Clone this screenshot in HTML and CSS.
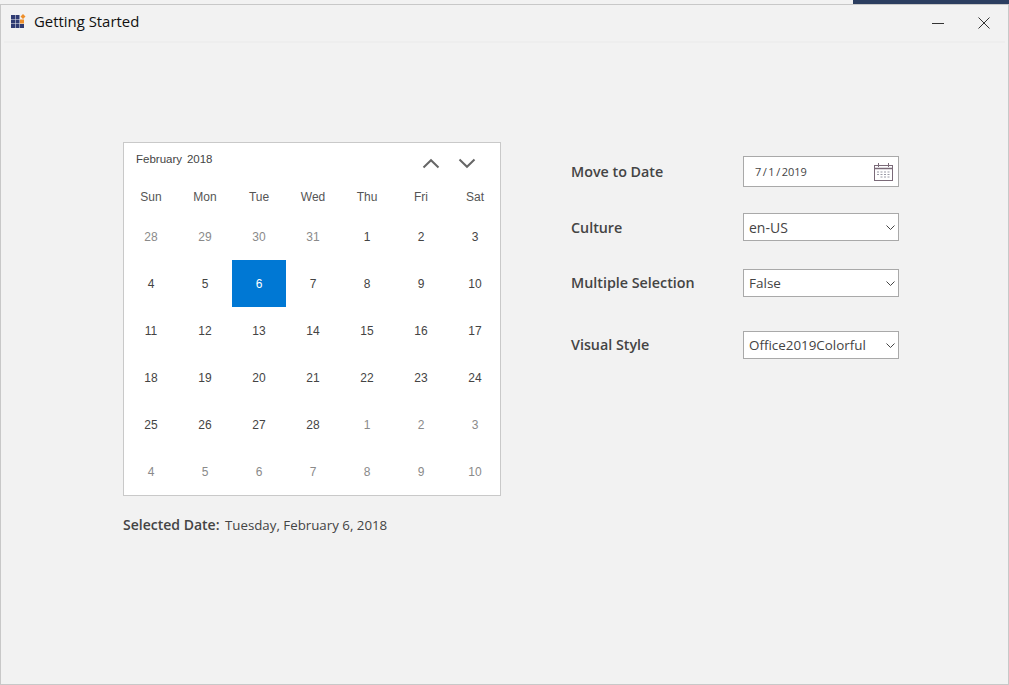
FILE: index.html
```html
<!DOCTYPE html>
<html lang="en">
<head>
<meta charset="utf-8">
<title>Getting Started</title>
<link rel="stylesheet" href="styles.css">
</head>
<body>
<div class="strip"><div class="strip-dark"></div></div>
<div class="window">
  <header class="titlebar">
    <svg class="app-icon" width="15" height="15" viewBox="0 0 15 15">
      <path fill="#2f3b73" d="M0 1h4v4H0zM4.500 1h4v4h-4zM0 5.500h4v4H0zM4.500 5.500h4v4h-4zM0 10h4v4H0zM4.500 10h4v4h-4zM9 10h4v4H9z"/>
      <path fill="#ee8f2b" d="M9 5.500h4v4H9zM12 0l2.500 2.500L12 5 9.500 2.500z"/>
    </svg>
    <span class="title">Getting Started</span>
    <span class="win-btn">
      <svg width="12" height="12" viewBox="0 0 12 12"><path d="M0 6.500h12" stroke="#333" stroke-width="1"/></svg>
    </span>
    <span class="win-btn close">
      <svg width="12" height="12" viewBox="0 0 12 12"><path d="M.5.500l11 11M11.500.500l-11 11" stroke="#333" stroke-width="1" fill="none"/></svg>
    </span>
  </header>
  <main class="content">
    <section class="left">
      <div class="calendar">
        <div class="cal-head">
          <span class="month">February&nbsp; 2018</span>
          <span class="nav">
            <svg width="18" height="11" viewBox="0 0 18 11"><path d="M1.500 9.500L9 2.200l7.500 7.300" fill="none" stroke="#666" stroke-width="2"/></svg>
            <svg width="18" height="11" viewBox="0 0 18 11"><path d="M1.500 1.500L9 8.800l7.500-7.300" fill="none" stroke="#666" stroke-width="2"/></svg>
          </span>
        </div>
        <div class="weekdays">
          <span>Sun</span><span>Mon</span><span>Tue</span><span>Wed</span><span>Thu</span><span>Fri</span><span>Sat</span>
        </div>
        <div class="days">
          <span class="dim">28</span><span class="dim">29</span><span class="dim">30</span><span class="dim">31</span><span>1</span><span>2</span><span>3</span>
          <span>4</span><span>5</span><span class="sel">6</span><span>7</span><span>8</span><span>9</span><span>10</span>
          <span>11</span><span>12</span><span>13</span><span>14</span><span>15</span><span>16</span><span>17</span>
          <span>18</span><span>19</span><span>20</span><span>21</span><span>22</span><span>23</span><span>24</span>
          <span>25</span><span>26</span><span>27</span><span>28</span><span class="dim">1</span><span class="dim">2</span><span class="dim">3</span>
          <span class="dim">4</span><span class="dim">5</span><span class="dim">6</span><span class="dim">7</span><span class="dim">8</span><span class="dim">9</span><span class="dim">10</span>
        </div>
      </div>
      <p class="selected"><b>Selected Date:</b> <span class="selected-value">Tuesday, February 6, 2018</span></p>
    </section>
    <section class="form">
      <div class="row r-date">
        <label>Move to Date</label>
        <div class="field date">
          <span class="date-text">7 / 1 / 2019</span>
          <svg width="20" height="20" viewBox="0 0 20 20">
            <rect x="1.500" y="3.500" width="18" height="15" fill="none" stroke="#7a6a78"/>
            <path d="M1.500 6.500h18" stroke="#7a6a78" stroke-width="1.500"/>
            <path d="M5.500 1v4M15.500 1v4" stroke="#7a6a78"/>
            <path d="M4 10h2M7.500 10h2M11 10h2M14.500 10h2M4 12.500h2M7.500 12.500h2M11 12.500h2M14.500 12.500h2M7.500 15h2M11 15h2M14.500 15h2" stroke="#9a9aa6"/>
          </svg>
        </div>
      </div>
      <div class="row r-culture">
        <label>Culture</label>
        <div class="field"><span>en-US</span><svg class="chev" width="9" height="5" viewBox="0 0 9 5"><path d="M.5.500L4.500 4.500 8.500.5" fill="none" stroke="#444"/></svg></div>
      </div>
      <div class="row r-multi">
        <label>Multiple Selection</label>
        <div class="field"><span>False</span><svg class="chev" width="9" height="5" viewBox="0 0 9 5"><path d="M.5.500L4.500 4.500 8.500.5" fill="none" stroke="#444"/></svg></div>
      </div>
      <div class="row r-style">
        <label>Visual Style</label>
        <div class="field"><span>Office2019Colorful</span><svg class="chev" width="9" height="5" viewBox="0 0 9 5"><path d="M.5.500L4.500 4.500 8.500.5" fill="none" stroke="#444"/></svg></div>
      </div>
    </section>
  </main>
</div>
</body>
</html>
```
FILE: styles.css
```css
* { box-sizing: border-box; }
html, body { margin: 0; height: 100%; overflow: hidden; }
body { background: #f2f2f2; font-family: "Open Sans", "Noto Sans", sans-serif; color: #333; }
.strip { height: 4px; display: flex; justify-content: flex-end; background: #f2f2f2; }
.strip-dark { width: 156px; background: #2c3e60; }
.window { height: 681px; border: 1px solid #c8c8c8; background: #f2f2f2; }
.titlebar { height: 38px; margin: 0 3px; padding: 0 0 4px 7px; display: flex; align-items: center; border-bottom: 2px solid #eeeeee; }
.app-icon { flex: none; }
.title { margin-left: 8px; font-size: 14.900px; color: #111; flex: 1; }
.win-btn { width: 46px; display: flex; justify-content: center; padding-top: 4px; }
.win-btn.close { margin-right: -2px; }
.content { display: flex; padding: 99px 0 0 122px; }
.left { width: 448px; flex: none; }
.calendar { width: 378px; height: 354px; background: #fff; border: 1px solid #c9c9c9; overflow: hidden; font-family: "Liberation Sans", Arial, sans-serif; font-size: 12px; }
.cal-head { height: 36px; padding: 10px 24px 0 12px; display: flex; justify-content: space-between; }
.month { color: #444; font-size: 11.500px; word-spacing: -0.750px; }
.nav { display: flex; gap: 18px; padding-top: 5px; align-items: flex-start; }
.weekdays, .days { display: grid; grid-template-columns: repeat(7, 54px); }
.weekdays { height: 34px; padding-top: 11px; color: #555; }
.weekdays span, .days span { text-align: center; }
.days { grid-auto-rows: 47px; }
.days span { line-height: 49px; height: 47px; color: #444; }
.days .dim { color: #8a8a8a; }
.days .sel { background: #0078d4; color: #fff; }
.selected { margin: 19px 0 0; font-size: 13.300px; color: #444; line-height: 20px; }
.selected b { font-weight: 600; font-size: 14px; }
.selected-value { margin-left: 2px; }
.form { width: 328px; padding-top: 14px; }
.row { display: flex; align-items: center; }
.row label { width: 172px; font-size: 14.300px; font-weight: 600; color: #444; }
.r-multi label, .r-style label { padding-bottom: 2px; }
.r-date { height: 31px; }
.r-culture { height: 28px; margin-top: 26px; }
.r-multi { height: 28px; margin-top: 28px; }
.r-style { height: 28px; margin-top: 34px; }
.field { width: 156px; height: 100%; background: #fff; border: 1px solid #a9a9a9; display: flex; align-items: center; justify-content: space-between; padding: 0 3px 0 5px; font-size: 14px; color: #444; }
.r-multi .field { font-size: 13.500px; }
.r-style .field { font-size: 13.400px; }
.date { padding: 0 5px 0 11px; }
.date-text { font-size: 11px; word-spacing: -1.350px; white-space: pre; }
.chev { flex: none; margin-top: 1px; }
```
